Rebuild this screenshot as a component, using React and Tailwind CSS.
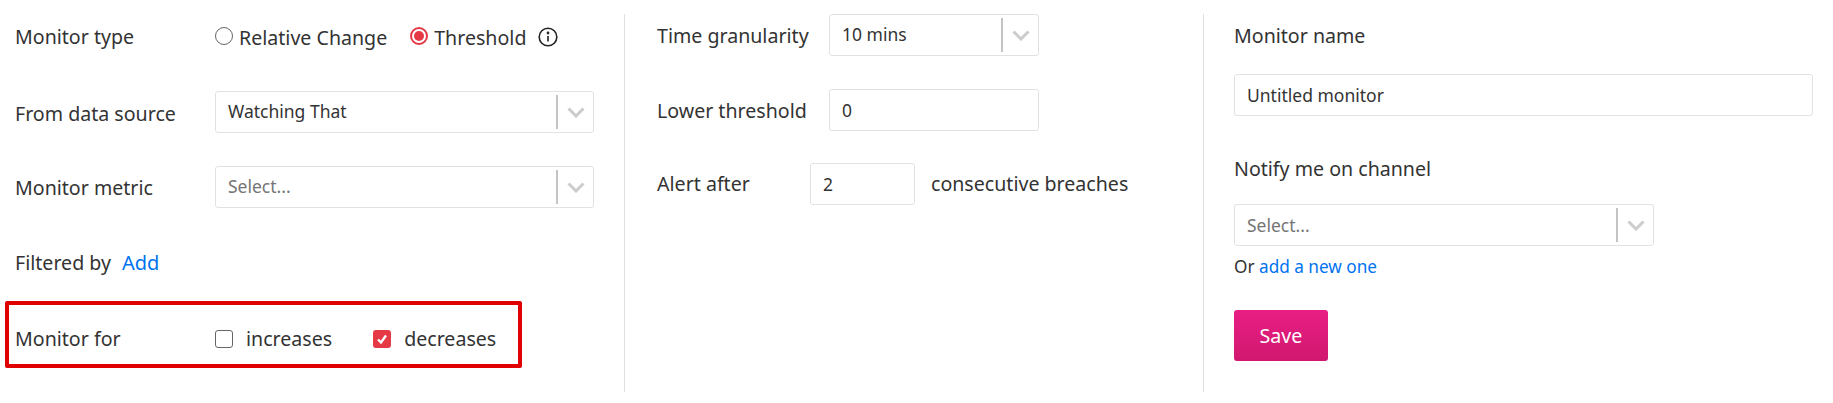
import React from 'react';

const Chevron = () => (
  <svg width="18" height="11" viewBox="0 0 18 11" fill="none" stroke="#cccccc" strokeWidth="3">
    <path d="M1.5 1.5 L9 9 L16.5 1.5" />
  </svg>
);

const Select = ({ value, placeholder, className }) => (
  <div className={`h-[42px] flex items-center bg-white border border-[#e2e2e2] rounded-[3px] ${className}`}>
    <span className={`flex-1 pl-[12px] text-[17.5px] -mt-[1px] ${placeholder ? 'text-[#757575]' : 'text-[#333333]'}`}>
      {value || placeholder}
    </span>
    <div className="w-[37px] h-[34px] border-l-2 border-[#c4c4c4] flex items-center justify-center">
      <Chevron />
    </div>
  </div>
);

const TextInput = ({ value, className }) => (
  <div className={`h-[42px] flex items-center pl-[12px] text-[17.5px] text-[#333333] bg-white border border-[#e2e2e2] rounded-[3px] ${className}`}>
    {value}
  </div>
);

const Radio = ({ checked, label }) => (
  <div className="flex items-center gap-[6px]">
    {checked ? (
      <span className="w-[18px] h-[18px] rounded-full border-2 border-[#e63946] flex items-center justify-center">
        <span className="w-[10px] h-[10px] rounded-full bg-[#e63946]" />
      </span>
    ) : (
      <span className="w-[18px] h-[18px] rounded-full border border-[#666666]" />
    )}
    <span className="mt-[3px]">{label}</span>
  </div>
);

const InfoIcon = () => (
  <svg width="20" height="20" viewBox="0 0 20 20" fill="none" stroke="#222222" strokeWidth="1.6">
    <circle cx="10" cy="10" r="8.8" />
    <path d="M10 9 V14.5" />
    <circle cx="10" cy="6" r="0.6" fill="#222222" />
  </svg>
);

export default function App() {
  return (
    <div className="w-[1833px] h-[403px] bg-white flex pt-[14px] text-[19.6px] text-[#333333] overflow-hidden font-['Noto_Sans',sans-serif]">
      <div className="w-[625px] h-[378px] border-r border-[#e0e0e0] pl-[15px] flex flex-col">
        <div className="h-[44px] flex items-center">
          <span className="w-[200px] mt-[1px]">Monitor type</span>
          <Radio label="Relative Change" />
          <div className="ml-[23px]"><Radio checked label="Threshold" /></div>
          <div className="ml-[12px] mt-[1px]"><InfoIcon /></div>
        </div>
        <div className="mt-[33px] h-[42px] flex items-center">
          <span className="w-[200px] mt-[3px]">From data source</span>
          <Select value="Watching That" className="w-[379px]" />
        </div>
        <div className="mt-[33px] h-[42px] flex items-center">
          <span className="w-[200px] mt-[2px]">Monitor metric</span>
          <Select placeholder="Select..." className="w-[379px]" />
        </div>
        <div className="mt-[40px] flex items-center">
          <span>Filtered by</span>
          <span className="ml-[11px] text-[#0073f0] text-[20px]">Add</span>
        </div>
        <div className="mt-[23px] -ml-[10px] w-[517px] h-[67px] border-[4px] border-[#e00000] rounded-[2px] pl-[6px] pt-[9px] flex items-center">
          <span className="w-[200px]">Monitor for</span>
          <span className="w-[18px] h-[18px] rounded-[3px] border border-[#666666]" />
          <span className="ml-[13px]">increases</span>
          <span className="ml-[41px] w-[18px] h-[18px] rounded-[3px] bg-[#e63946] flex items-center justify-center">
            <svg width="12" height="12" viewBox="0 0 12 12" fill="none" stroke="#ffffff" strokeWidth="2.4">
              <path d="M2 6.5 L5 9.5 L10 2.5" />
            </svg>
          </span>
          <span className="ml-[13px]">decreases</span>
        </div>
      </div>

      <div className="w-[579px] h-[378px] border-r border-[#e0e0e0] pl-[32px] flex flex-col">
        <div className="flex items-center">
          <span className="w-[172px] mt-[2px]">Time granularity</span>
          <Select value="10 mins" className="w-[210px]" />
        </div>
        <div className="mt-[33px] flex items-center">
          <span className="w-[172px] mt-[2px]">Lower threshold</span>
          <TextInput value="0" className="w-[210px]" />
        </div>
        <div className="mt-[32px] flex items-center">
          <span className="w-[153px]">Alert after</span>
          <TextInput value="2" className="w-[105px]" />
          <span className="ml-[16px]">consecutive breaches</span>
        </div>
      </div>

      <div className="flex-1 pl-[30px] pr-[20px] flex flex-col">
        <div className="h-[44px] flex items-center">Monitor name</div>
        <TextInput value="Untitled monitor" className="mt-[16px] w-full" />
        <div className="mt-[38px]">Notify me on channel</div>
        <Select placeholder="Select..." className="mt-[21px] w-[420px]" />
        <div className="mt-[8px] text-[17.2px]">
          Or <span className="text-[#0073f0]">add a new one</span>
        </div>
        <button className="mt-[30px] w-[94px] h-[51px] rounded-[3px] text-white bg-gradient-to-b from-[#e91e84] to-[#d0186f]">
          Save
        </button>
      </div>
    </div>
  );
}
